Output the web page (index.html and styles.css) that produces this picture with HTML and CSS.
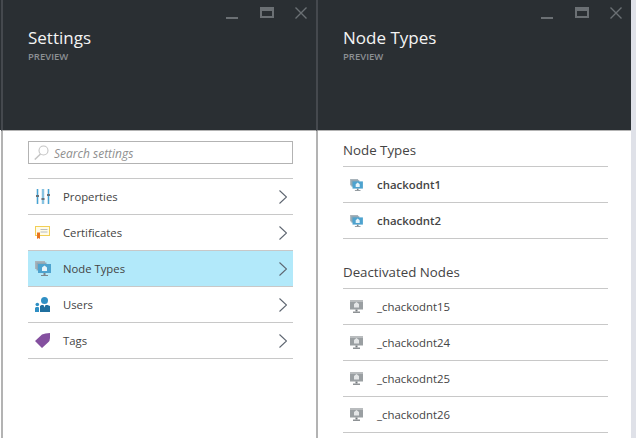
FILE: index.html
```html
<!DOCTYPE html>
<html lang="en">
<head>
    <meta charset="UTF-8">
    <title>Settings - Node Types</title>
    <link rel="stylesheet" href="styles.css">
</head>
<body>
    <svg class="defs" width="0" height="0">
        <symbol id="node" viewBox="0 0 16 15">
            <rect x="0" y="0" width="10" height="8" fill="#a9b4bb"/>
            <rect x="1.500" y="1.500" width="10" height="8" fill="#8fa6b3"/>
            <rect x="3" y="3" width="13" height="9" fill="#4ea3cf"/>
            <path d="M9.500 4.500l2.500 2v3.500h-5v-3.500z" fill="#e8f5fb"/>
            <rect x="8.500" y="12" width="2" height="2" fill="#7d868c"/>
            <rect x="6" y="14" width="7" height="1" fill="#7d868c"/>
        </symbol>
        <symbol id="node-off" viewBox="0 0 13 13">
            <rect x="0" y="0" width="13" height="9.500" fill="#9a9fa2"/>
            <rect x="0" y="0" width="13" height="2" fill="#b9bcbe"/>
            <path d="M6.500 2l2.500 2v3.500h-5v-3.500z" fill="#e4e6e7"/>
            <rect x="5.500" y="9.500" width="2" height="2" fill="#777c80"/>
            <rect x="3" y="11.500" width="7" height="1.500" fill="#8e9295"/>
        </symbol>
        <symbol id="chevron" viewBox="0 0 8 14">
            <path d="M0.500 0.500L7.500 7L0.500 13.500" fill="none" stroke="#5d6570" stroke-width="1.100"/>
        </symbol>
    </svg>

    <section class="blade">
        <header class="blade-head">
            <div class="controls">
                <span class="ctl-min"></span>
                <span class="ctl-max"></span>
                <svg width="12" height="12" viewBox="0 0 12 12"><path d="M0.500 0.500l11 11M11.500 0.500l-11 11" stroke="#6b7074" stroke-width="1.400"/></svg>
            </div>
            <h1>Settings</h1>
            <div class="preview">PREVIEW</div>
        </header>
        <div class="blade-body">
            <div class="search">
                <svg width="15" height="15" viewBox="0 0 15 15"><circle cx="9.500" cy="5.500" r="4.500" fill="none" stroke="#c4c4c4" stroke-width="1.100"/><path d="M6.500 9L0.800 14.500" stroke="#c4c4c4" stroke-width="1.500"/></svg>
                <span class="search-text">Search settings</span>
            </div>
            <ul class="menu">
                <li class="menu-row">
                    <svg class="menu-icon icon-props" width="14" height="15" viewBox="0 0 14 15">
                        <rect x="0" y="0" width="3" height="15" fill="#cfe3ee"/><rect x="5.500" y="0" width="3" height="15" fill="#cfe3ee"/><rect x="11" y="0" width="3" height="15" fill="#cfe3ee"/>
                        <rect x="1" y="0" width="1" height="15" fill="#45a5d6"/><rect x="6.500" y="0" width="1" height="15" fill="#45a5d6"/><rect x="12" y="0" width="1" height="15" fill="#45a5d6"/>
                        <rect x="0" y="6" width="3" height="2" fill="#66717a"/><rect x="5.500" y="9" width="3" height="2" fill="#66717a"/><rect x="11" y="5" width="3" height="2" fill="#66717a"/>
                    </svg>
                    <span>Properties</span>
                    <svg class="chevron"><use href="#chevron"/></svg>
                </li>
                <li class="menu-row">
                    <svg class="menu-icon" width="15" height="13" viewBox="0 0 15 13">
                        <rect x="0.500" y="0.500" width="14" height="9" fill="#fffbe8" stroke="#f2cf55"/>
                        <path d="M5.500 3.500h7M5.500 6h7" stroke="#b9bdc1" stroke-width="1"/>
                        <path d="M2 6.500h3v6.500l-1.500-1-1.500 1z" fill="#e8741e"/>
                    </svg>
                    <span>Certificates</span>
                    <svg class="chevron"><use href="#chevron"/></svg>
                </li>
                <li class="menu-row menu-row-active">
                    <svg class="menu-icon icon-wide" width="16" height="15"><use href="#node"/></svg>
                    <span>Node Types</span>
                    <svg class="chevron"><use href="#chevron"/></svg>
                </li>
                <li class="menu-row">
                    <svg class="menu-icon" width="15" height="15" viewBox="0 0 15 15">
                        <circle cx="9.500" cy="3.500" r="3.500" fill="#2f8fc4"/>
                        <path d="M5 15V9l1.500-1h6L15 9v6z" fill="#1f6f9f"/>
                        <path d="M8.500 8h2L9.500 10.500z" fill="#fff"/>
                        <circle cx="2.300" cy="7.500" r="1.800" fill="#2f8fc4"/>
                        <path d="M0 15v-4l1-1h2.500l0.500 1v4z" fill="#2f8fc4"/>
                    </svg>
                    <span>Users</span>
                    <svg class="chevron"><use href="#chevron"/></svg>
                </li>
                <li class="menu-row">
                    <svg class="menu-icon" width="15" height="15" viewBox="0 0 15 15">
                        <path d="M0 8L7 1.500Q10 0 15 0L15 5Q15 8 13 9.500L7 15z" fill="#84509f"/>
                    </svg>
                    <span>Tags</span>
                    <svg class="chevron"><use href="#chevron"/></svg>
                </li>
            </ul>
        </div>
    </section>

    <section class="blade">
        <header class="blade-head">
            <div class="controls">
                <span class="ctl-min"></span>
                <span class="ctl-max"></span>
                <svg width="12" height="12" viewBox="0 0 12 12"><path d="M0.500 0.500l11 11M11.500 0.500l-11 11" stroke="#6b7074" stroke-width="1.400"/></svg>
            </div>
            <h1>Node Types</h1>
            <div class="preview">PREVIEW</div>
        </header>
        <div class="blade-body">
            <h2>Node Types</h2>
            <ul>
                <li class="node-row node-row-on"><svg class="node-icon" width="13" height="12"><use href="#node"/></svg><span>chackodnt1</span></li>
                <li class="node-row node-row-on"><svg class="node-icon" width="13" height="12"><use href="#node"/></svg><span>chackodnt2</span></li>
            </ul>
            <h2 class="second">Deactivated Nodes</h2>
            <ul>
                <li class="node-row"><svg class="node-icon" width="13" height="13"><use href="#node-off"/></svg><span>_chackodnt15</span></li>
                <li class="node-row"><svg class="node-icon" width="13" height="13"><use href="#node-off"/></svg><span>_chackodnt24</span></li>
                <li class="node-row"><svg class="node-icon" width="13" height="13"><use href="#node-off"/></svg><span>_chackodnt25</span></li>
                <li class="node-row"><svg class="node-icon" width="13" height="13"><use href="#node-off"/></svg><span>_chackodnt26</span></li>
            </ul>
        </div>
    </section>
</body>
</html>
```

FILE: styles.css
```css
html, body {
    margin: 0;
    height: 100%;
    overflow: hidden;
}

body {
    display: flex;
    box-sizing: border-box;
    padding-left: 1px;
    background: linear-gradient(#2a2f33 130px, #fff 130px) left / 1px 100% no-repeat, #dfe1e8;
    font-family: "Open Sans", "Noto Sans", sans-serif;
    color: #444;
}

.defs {
    display: none;
}

ul {
    list-style: none;
    margin: 0;
    padding: 0;
}

.blade {
    display: flex;
    flex-direction: column;
    width: 313px;
    height: 438px;
    background: #fff;
    border-left: 2px solid #b3b3b3;
}

.blade-head {
    flex: none;
    height: 131px;
    box-sizing: border-box;
    margin-left: -2px;
    padding-left: 25px;
    background: #2a2f33;
    border-left: 2px solid #45494e;
    border-bottom: 1px solid #b3b3b3;
}

.controls {
    display: flex;
    justify-content: flex-end;
    gap: 21px;
    height: 12px;
    padding: 7px 9px 0 0;
}

.ctl-min {
    width: 12px;
    height: 2px;
    margin: 10px 1px 0 0;
    background: #6b7074;
}

.ctl-max {
    width: 10px;
    height: 5px;
    border: 2px solid #6b7074;
    border-top-width: 4px;
}

.blade-head h1 {
    margin: 7px 0 0;
    font-size: 17px;
    font-weight: 400;
    line-height: 24px;
    color: #f4f4f4;
}

.preview {
    margin-top: 1px;
    font-size: 9.500px;
    font-weight: 600;
    line-height: 12px;
    color: #8c9094;
}

.blade-body {
    flex: 1;
    padding: 10px 23px 0 25px;
}

.search {
    display: flex;
    align-items: center;
    gap: 5px;
    height: 21px;
    padding-left: 5px;
    border: 1px solid #b3b3b3;
    font-size: 12px;
    font-style: italic;
    color: #8f8f8f;
}

.search-text {
    padding-top: 2px;
}

.menu {
    margin-top: 14px;
    border-top: 1px solid #c8c8c8;
}

.menu-row {
    display: flex;
    align-items: center;
    height: 35px;
    border-bottom: 1px solid #c8c8c8;
    font-size: 11.300px;
}

.menu-row-active {
    background: #b2e9fa;
}

.menu-icon {
    flex: none;
    margin: 0 13px 0 7px;
}

.icon-props {
    margin-left: 8px;
}

.icon-wide {
    margin-right: 12px;
}

.chevron {
    width: 8px;
    height: 14px;
    margin-left: auto;
    margin-right: 6px;
}

h2 {
    margin: 0;
    padding-bottom: 6px;
    font-size: 13.300px;
    font-weight: 400;
    line-height: 19px;
    border-bottom: 1px solid #c8c8c8;
}

h2.second {
    margin-top: 24px;
}

.node-row {
    display: flex;
    align-items: center;
    height: 35px;
    border-bottom: 1px solid #c8c8c8;
    font-size: 11.400px;
}

.node-row-on {
    font-weight: 600;
}

.node-icon {
    flex: none;
    margin: 0 14px 0 7px;
}
```
